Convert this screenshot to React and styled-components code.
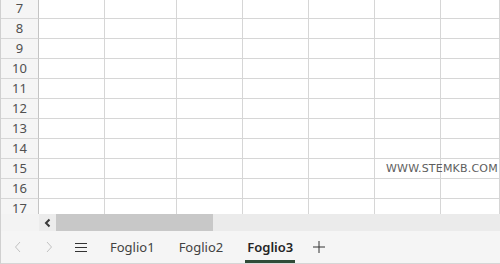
import React from "react";
import styled, { createGlobalStyle } from "styled-components";

const Global = createGlobalStyle`
  html, body { margin: 0; padding: 0; background: #fff; }
  body { font-family: "Noto Sans", "Open Sans", sans-serif; }
  * { box-sizing: border-box; }
`;

const Frame = styled.div`
  position: relative;
  width: 500px;
  height: 264px;
  display: flex;
  flex-direction: column;
  overflow: hidden;
  border-left: 1px solid #d0d0d0;
  border-bottom: 1px solid #d6d6d6;
`;

const Grid = styled.div`
  flex: 1;
  overflow: hidden;
  display: flex;
  flex-direction: column;
`;

const Rows = styled.div`
  margin-top: -1px;
  display: flex;
  flex-direction: column;
`;

const Row = styled.div`
  display: flex;
  height: 20px;
  flex: none;
`;

const RowHeader = styled.div`
  width: 38px;
  flex: none;
  background: #f5f5f5;
  border-right: 1px solid #c4c4c4;
  border-bottom: 1px solid #d6d6d6;
  color: #505050;
  font-size: 13px;
  display: flex;
  align-items: center;
  justify-content: center;
  line-height: 1;
`;

const Cell = styled.div`
  width: ${(p) => p.$w}px;
  flex: ${(p) => (p.$grow ? "1" : "none")};
  border-right: 1px solid #d6d6d6;
  border-bottom: 1px solid #d6d6d6;
  background: #fff;
`;

const ScrollRow = styled.div`
  height: 17px;
  flex: none;
  display: flex;
  background: #ebebeb;
`;

const ScrollCorner = styled.div`
  width: 38px;
  flex: none;
  background: #f3f3f3;
`;

const ScrollBtn = styled.div`
  width: 17px;
  flex: none;
  display: flex;
  align-items: center;
  justify-content: center;
  background: #ececec;
`;

const Thumb = styled.div`
  width: 157px;
  flex: none;
  background: #c8c8c8;
`;

const TabBar = styled.div`
  height: 32px;
  flex: none;
  display: flex;
  align-items: stretch;
  background: #f5f5f5;
`;

const NavBtn = styled.div`
  width: ${(p) => p.$w}px;
  flex: none;
  display: flex;
  align-items: center;
  justify-content: center;
`;

const Tab = styled.div`
  position: relative;
  flex: none;
  display: flex;
  align-items: center;
  padding: 0 ${(p) => p.$pad}px;
  font-size: 13px;
  color: ${(p) => (p.$active ? "#242424" : "#424242")};
  font-weight: ${(p) => (p.$active ? 600 : 400)};
  &::after {
    content: "";
    display: ${(p) => (p.$active ? "block" : "none")};
    position: absolute;
    left: ${(p) => p.$pad - 2}px;
    right: ${(p) => p.$pad - 2}px;
    bottom: 0;
    height: 3px;
    background: #2f4b38;
  }
`;

const Watermark = styled.div`
  position: absolute;
  left: 385px;
  top: 162px;
  font-family: "DejaVu Sans", Verdana, sans-serif;
  font-size: 11px;
  letter-spacing: 0.2px;
  color: #5e5e5e;
  line-height: 13px;
`;

const widths = [66, 72, 66, 66, 66, 66];
const rowNums = [7, 8, 9, 10, 11, 12, 13, 14, 15, 16, 17];

const Chevron = ({ dir, color }) => (
  <svg width="8" height="12" viewBox="0 0 8 12">
    <path
      d={dir === "left" ? "M6 1 L1.5 6 L6 11" : "M2 1 L6.5 6 L2 11"}
      fill="none"
      stroke={color}
      strokeWidth="1"
    />
  </svg>
);

export default function App() {
  return (
    <>
      <Global />
      <Frame>
        <Grid>
          <Rows>
            {rowNums.map((n) => (
              <Row key={n}>
                <RowHeader>{n}</RowHeader>
                {widths.map((w, i) => (
                  <Cell key={i} $w={w} />
                ))}
                <Cell $w={60} $grow />
              </Row>
            ))}
          </Rows>
        </Grid>
        <ScrollRow>
          <ScrollCorner />
          <ScrollBtn>
            <svg width="8" height="10" viewBox="0 0 8 10">
              <path d="M5.5 1.5 L2 5 L5.5 8.5" fill="none" stroke="#3a3a3a" strokeWidth="2" />
            </svg>
          </ScrollBtn>
          <Thumb />
        </ScrollRow>
        <TabBar>
          <NavBtn $w={33}>
            <Chevron dir="left" color="#c2c2c2" />
          </NavBtn>
          <NavBtn $w={30}>
            <Chevron dir="right" color="#c2c2c2" />
          </NavBtn>
          <NavBtn $w={34}>
            <svg width="12" height="10" viewBox="0 0 12 10">
              <path d="M0 1.5 H12 M0 5.5 H12 M0 9.5 H12" stroke="#333" strokeWidth="1" />
            </svg>
          </NavBtn>
          <Tab $pad={12}>Foglio1</Tab>
          <Tab $pad={12}>Foglio2</Tab>
          <Tab $pad={12} $active>Foglio3</Tab>
          <NavBtn $w={28}>
            <svg width="12" height="12" viewBox="0 0 12 12">
              <path d="M6 0 V12 M0 6 H12" stroke="#333" strokeWidth="1" />
            </svg>
          </NavBtn>
        </TabBar>
        <Watermark>WWW.STEMKB.COM</Watermark>
      </Frame>
    </>
  );
}
